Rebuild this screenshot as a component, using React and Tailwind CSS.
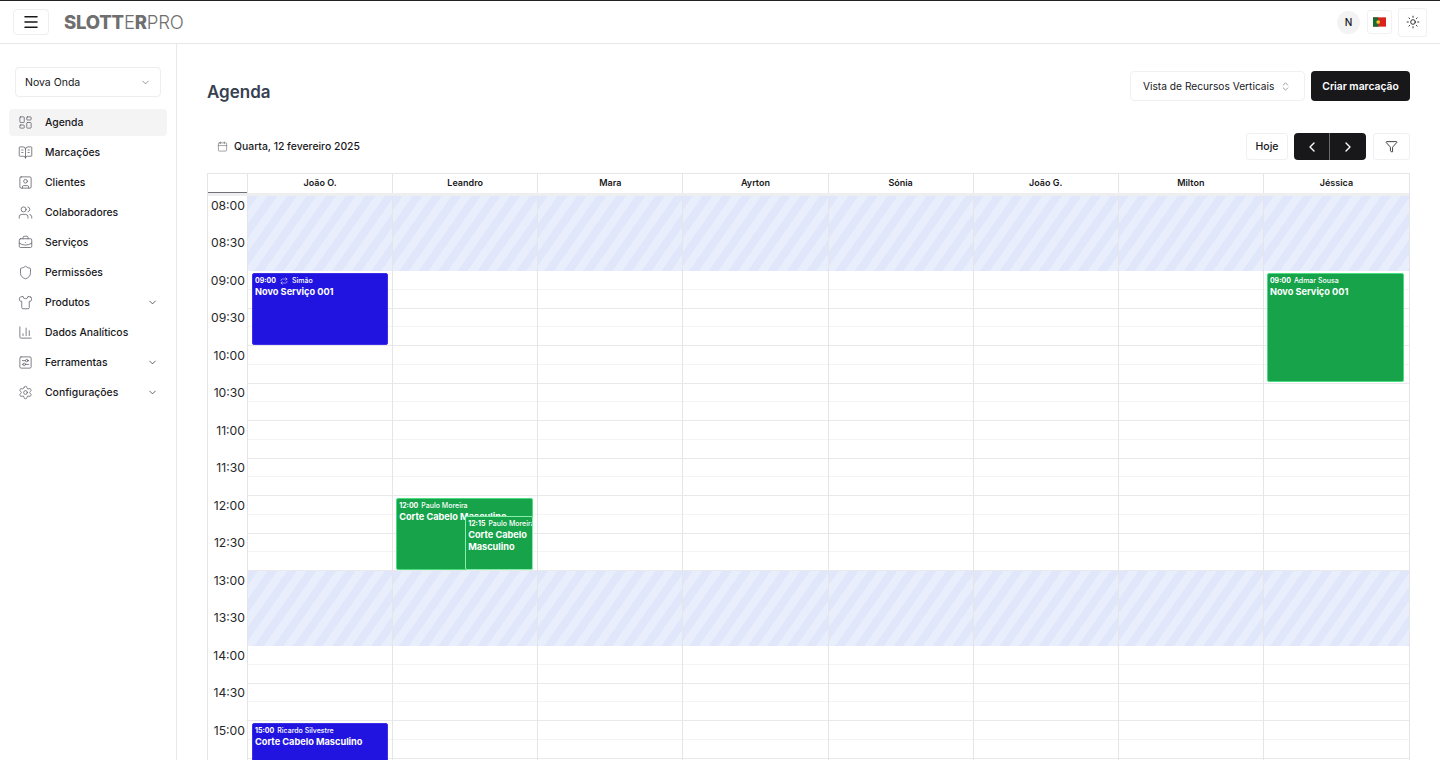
import React from "react";
import { Menu, ChevronDown, ChevronsUpDown, ChevronLeft, ChevronRight, Funnel, Sun, Calendar, LayoutDashboard, BookOpenText, SquareUser, Users, BriefcaseBusiness, Shield, Shirt, ChartColumn, Settings, Repeat } from "lucide-react";

const ToolsIcon = (p) => (
  <svg viewBox="0 0 24 24" fill="none" stroke="currentColor" strokeWidth="1.5" strokeLinecap="round" strokeLinejoin="round" {...p}>
    <rect x="3" y="3" width="18" height="18" rx="2" />
    <path d="M7 9h5M16 9h1M7 15h1M12 15h5" />
    <circle cx="14" cy="9" r="2" />
    <circle cx="10" cy="15" r="2" />
  </svg>
);

const nav = [
  ["Agenda", LayoutDashboard, false, true],
  ["Marcações", BookOpenText],
  ["Clientes", SquareUser],
  ["Colaboradores", Users],
  ["Serviços", BriefcaseBusiness],
  ["Permissões", Shield],
  ["Produtos", Shirt, true],
  ["Dados Analíticos", ChartColumn],
  ["Ferramentas", ToolsIcon, true],
  ["Configurações", Settings, true],
];

const staff = ["João O.", "Leandro", "Mara", "Ayrton", "Sónia", "João G.", "Milton", "Jéssica"];
const times = ["08:00","08:30","09:00","09:30","10:00","10:30","11:00","11:30","12:00","12:30","13:00","13:30","14:00","14:30","15:00","15:30"];
const slots = Array.from({ length: 32 });
const BLUE = "bg-[#2114e0] border-[#3b30e8]";
const GREEN = "bg-[#17a34a] border-[#4ade80]";

const events = {
  0: [
    { h: 72, left: 4, right: 4, color: BLUE, time: "09:00", who: "Simão", title: "Novo Serviço 001", at: 77, repeat: true },
    { h: 72, left: 4, right: 4, color: BLUE, time: "15:00", who: "Ricardo Silvestre", title: "Corte Cabelo Masculino", at: 527 },
  ],
  1: [
    { h: 72, left: 3, right: 4, color: GREEN, time: "12:00", who: "Paulo Moreira", title: "Corte Cabelo Masculino", at: 302 },
    { h: 54, left: 72, right: 4, color: "bg-[#17a34a] border-[#86efac]", time: "12:15", who: "Paulo Moreira", title: "Corte Cabelo Masculino", at: 320 },
  ],
  7: [
    { h: 109, left: 3, right: 5, color: GREEN, time: "09:00", who: "Admar Sousa", title: "Novo Serviço 001", at: 77 },
  ],
};

const Stripes = ({ top }) => (
  <div
    className="absolute left-0 right-0 h-[75px] bg-[repeating-linear-gradient(125deg,#e0e7fb_0px,#e0e7fb_8px,#e9eefd_8px,#e9eefd_16px)]"
    style={{ top }}
  />
);

function Event({ e }) {
  return (
    <div
      className={`absolute overflow-hidden rounded-[2px] border px-[2px] py-[2px] text-white ${e.color}`}
      style={{ top: e.at, height: e.h, left: e.left, right: e.right }}
    >
      <div className="flex items-center gap-[3px] whitespace-nowrap text-[7px] leading-[10px]">
        <span className="font-bold">{e.time}</span>
        {e.repeat && <Repeat className="mx-[1px] size-[8px]" strokeWidth={1.5} />}
        <span className="font-medium">{e.who}</span>
      </div>
      <div className="text-[9.2px] font-bold leading-[11.5px]">{e.title}</div>
    </div>
  );
}

export default function App() {
  return (
    <div className="flex h-screen flex-col overflow-hidden border-t border-[#222] bg-white font-['Inter',sans-serif] text-[#18181b]">
      <header className="flex h-[43px] shrink-0 items-center justify-between border-b border-[#e8e8ea] pl-[13px] pr-[13px]">
        <div className="flex items-center gap-[15px]">
          <button className="flex h-[26px] w-[36px] items-center justify-center rounded-[4px] border border-[#eeeef0]">
            <Menu className="size-[18px]" strokeWidth={2} />
          </button>
          <div className="text-[18.5px] leading-none tracking-[-0.2px] text-[#6f6f6f]">
            <span className="font-extrabold">SLOTT</span>
            <span className="font-light">E</span>
            <span className="font-extrabold">R</span>
            <span className="font-light">PRO</span>
          </div>
        </div>
        <div className="flex items-center">
          <div className="flex size-[23px] items-center justify-center rounded-full bg-[#f3f3f4] text-[10px] font-medium">N</div>
          <div className="ml-[7px] flex h-[24px] w-[25px] items-center justify-center rounded-[3px] border border-[#f1f1f3]">
            <svg viewBox="0 0 14 10" className="h-[10px] w-[13px]">
              <rect width="14" height="10" fill="#d8241c" />
              <rect width="5.6" height="10" fill="#1a6b32" />
              <circle cx="5.6" cy="5" r="2" fill="#f4c430" />
            </svg>
          </div>
          <div className="ml-[6px] flex size-[29px] items-center justify-center rounded-[3px] border border-[#f1f1f3]">
            <Sun className="size-[14px]" strokeWidth={1.5} />
          </div>
        </div>
      </header>

      <div className="flex min-h-0 flex-1">
        <aside className="w-[177px] shrink-0 border-r border-[#e8e8ea] pl-[9px] pr-[9px] pt-[23px]">
          <div className="ml-[6px] flex h-[30px] w-[146px] items-center justify-between rounded-[4px] border border-[#eeeef0] pl-[9px] pr-[9px] pt-[1px] text-[10.5px]">
            <span>Nova Onda</span>
            <ChevronDown className="size-[11px] text-[#52525b]" strokeWidth={1.25} />
          </div>
          <nav className="mt-[12px] flex flex-col gap-[3px]">
            {nav.map(([label, Icon, chev, active]) => (
              <div key={label} className={`flex h-[27px] items-center rounded-[4px] pl-[9px] pr-[9px] text-[10.4px] font-medium ${active ? "bg-[#f4f4f5]" : ""}`}>
                <Icon className="size-[15px] shrink-0 text-[#5f5f68]" strokeWidth={1.25} />
                <span className="ml-[12px] flex-1 whitespace-nowrap">{label}</span>
                {chev && <ChevronDown className="size-[11px] text-[#3f3f46]" strokeWidth={1.75} />}
              </div>
            ))}
          </nav>
        </aside>

        <main className="min-w-0 flex-1 pl-[30px] pr-[30px] pt-[27px]">
          <div className="flex h-[30px] justify-between">
            <h1 className="mt-[11px] text-[17px] font-semibold leading-[20px] text-[#374151]">Agenda</h1>
            <div className="flex gap-[6px]">
              <div className="flex h-[30px] w-[175px] items-center justify-between whitespace-nowrap rounded-[4px] border border-[#f0f0f2] pl-[12px] pr-[13px] pt-[1px] text-[10.2px]">
                <span>Vista de Recursos Verticais</span>
                <ChevronsUpDown className="size-[11px] text-[#71717a]" strokeWidth={1.5} />
              </div>
              <button className="h-[30px] w-[99px] rounded-[4px] bg-[#18181b] pt-[1px] text-[10.3px] font-semibold text-white">Criar marcação</button>
            </div>
          </div>

          <div className="mt-[32px] flex h-[27px] items-center justify-between pl-[10px]">
            <div className="flex items-center gap-[6px] text-[10.4px] font-medium">
              <Calendar className="size-[11px] text-[#5f5f68]" strokeWidth={1.25} />
              <span>Quarta, 12 fevereiro 2025</span>
            </div>
            <div className="flex items-center">
              <button className="h-[27px] w-[42px] rounded-[3px] border border-[#f0f0f2] text-[10.5px] font-medium">Hoje</button>
              <div className="ml-[6px] flex h-[27px] w-[72px] overflow-hidden rounded-[4px] bg-[#18181b] text-white">
                <div className="flex w-[36px] items-center justify-center border-r border-[#6b6b6b]"><ChevronLeft className="size-[16px]" strokeWidth={2} /></div>
                <div className="flex flex-1 items-center justify-center"><ChevronRight className="size-[16px]" strokeWidth={2} /></div>
              </div>
              <button className="ml-[7px] flex h-[27px] w-[37px] items-center justify-center rounded-[3px] border border-[#f0f0f2]">
                <Funnel className="size-[13px]" strokeWidth={1.5} />
              </button>
            </div>
          </div>

          <div className="mt-[13px] border-l border-r border-t border-[#e5e5e7]">
            <div className="grid h-[22px] grid-cols-[39px_repeat(7,145.14px)_1fr] border-b-[3px] border-[#eeeef0]">
              <div className="border-b border-[#71717a]" />
              {staff.map((s) => (
                <div key={s} className="flex items-center justify-center border-l border-[#e5e5e7] pb-[2px] text-[9px] font-semibold">{s}</div>
              ))}
            </div>
            <div className="grid grid-cols-[39px_repeat(7,145.14px)_1fr]">
              <div>
                {times.map((t) => (
                  <div key={t} className="h-[37.5px] pr-[2px] pt-[0.5px] text-right text-[12.2px] leading-[18px] text-[#27272a]">{t}</div>
                ))}
              </div>
              {staff.map((s, i) => (
                <div key={s} className="relative h-[600px] border-l border-[#e5e5e7]">
                  {slots.map((_, k) => (
                    <div key={k} className={`h-[18.75px] border-b ${k % 2 ? "border-[#e9e9eb]" : "border-[#f4f4f5]"}`} />
                  ))}
                  <Stripes top={0} />
                  <Stripes top={375} />
                  {(events[i] || []).map((e, n) => <Event key={n} e={e} />)}
                </div>
              ))}
            </div>
          </div>
        </main>
      </div>
    </div>
  );
}
